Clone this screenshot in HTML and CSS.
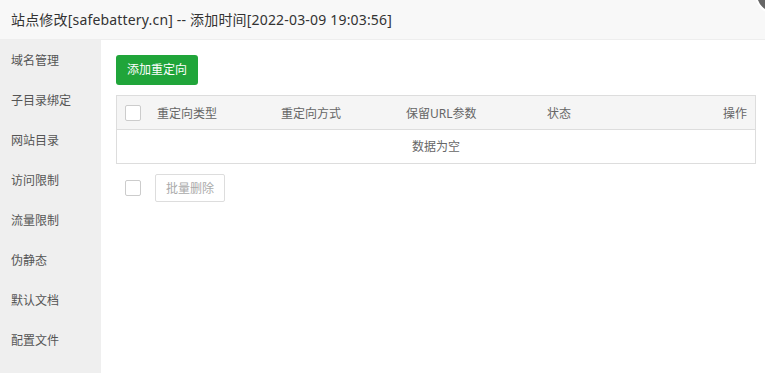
FILE: index.html
```html
<!DOCTYPE html>
<html lang="zh-CN">
<head>
<meta charset="utf-8">
<title>站点修改</title>
<link rel="stylesheet" href="styles.css">
</head>
<body>
<div class="layer">
  <div class="layer-title">站点修改[safebattery.cn] -- 添加时间[2022-03-09 19:03:56]</div>
  <span class="layer-close"></span>
  <div class="layer-body">
    <ul class="side-menu">
      <li>域名管理</li>
      <li>子目录绑定</li>
      <li>网站目录</li>
      <li>访问限制</li>
      <li>流量限制</li>
      <li>伪静态</li>
      <li>默认文档</li>
      <li>配置文件</li>
    </ul>
    <div class="main">
      <button class="btn-green">添加重定向</button>
      <div class="table">
        <div class="row head">
          <div class="cell cb-cell"><span class="checkbox"></span></div>
          <div class="cell">重定向类型</div>
          <div class="cell">重定向方式</div>
          <div class="cell">保留URL参数</div>
          <div class="cell">状态</div>
          <div class="cell right">操作</div>
        </div>
        <div class="empty">数据为空</div>
      </div>
      <div class="footer-bar">
        <span class="checkbox"></span>
        <button class="btn-disabled">批量删除</button>
      </div>
    </div>
  </div>
</div>
</body>
</html>
```
FILE: styles.css
```css
* { box-sizing: border-box; }
html, body { margin: 0; padding: 0; }
body {
  width: 765px;
  height: 373px;
  overflow: hidden;
  background: #fff;
  font-family: "Noto Sans", "Noto Sans CJK SC", sans-serif;
  color: #333;
}
.layer { position: relative; height: 373px; display: flex; flex-direction: column; }
.layer-title {
  height: 40px;
  line-height: 39px;
  padding-left: 11px;
  font-size: 14px;
  letter-spacing: 0.18px;
  color: #333;
  background: #f8f8f8;
  border-bottom: 1px solid #eee;
  flex: none;
}
.layer-close {
  position: absolute;
  left: 755px;
  top: -26px;
  width: 40px;
  height: 40px;
  border-radius: 50%;
  background: #666;
  border: 2px solid #fff;
}
.layer-body { flex: 1; display: flex; }
.side-menu {
  list-style: none;
  margin: 0;
  padding: 0;
  width: 101px;
  background: #efefef;
  flex: none;
}
.side-menu li {
  height: 40px;
  line-height: 42px;
  padding-left: 11px;
  font-size: 12px;
  color: #555;
}
.main { flex: 1; padding: 15px 9px 0 15px; }
.btn-green {
  display: block;
  height: 30px;
  width: 82px;
  padding: 0;
  border: none;
  border-radius: 3px;
  background: #20a53a;
  color: #fff;
  font-family: inherit;
  font-size: 12px;
  line-height: 30px;
}
.table {
  margin-top: 10px;
  width: 640px;
  border: 1px solid #ddd;
}
.row.head {
  display: grid;
  grid-template-columns: 40px 124px 125px 141px 1fr auto;
  height: 34px;
  background: #f5f5f5;
  border-bottom: 1px solid #ddd;
  align-items: center;
  font-size: 12px;
  color: #666;
}
.cb-cell { padding-left: 8px; display: flex; align-items: center; }
.cell.right { text-align: right; padding-right: 8px; }
.checkbox {
  display: inline-block;
  width: 16px;
  height: 16px;
  border: 1px solid #ccc;
  border-radius: 2px;
  background: #fff;
}
.empty {
  height: 33px;
  line-height: 33px;
  text-align: center;
  font-size: 12px;
  color: #666;
}
.footer-bar {
  margin-top: 10px;
  display: flex;
  align-items: center;
  gap: 14px;
  padding-left: 9px;
}
.btn-disabled {
  height: 28px;
  width: 70px;
  padding: 0;
  background: #fff;
  border: 1px solid #ddd;
  border-radius: 2px;
  color: #aaa;
  font-family: inherit;
  font-size: 12px;
}
```
